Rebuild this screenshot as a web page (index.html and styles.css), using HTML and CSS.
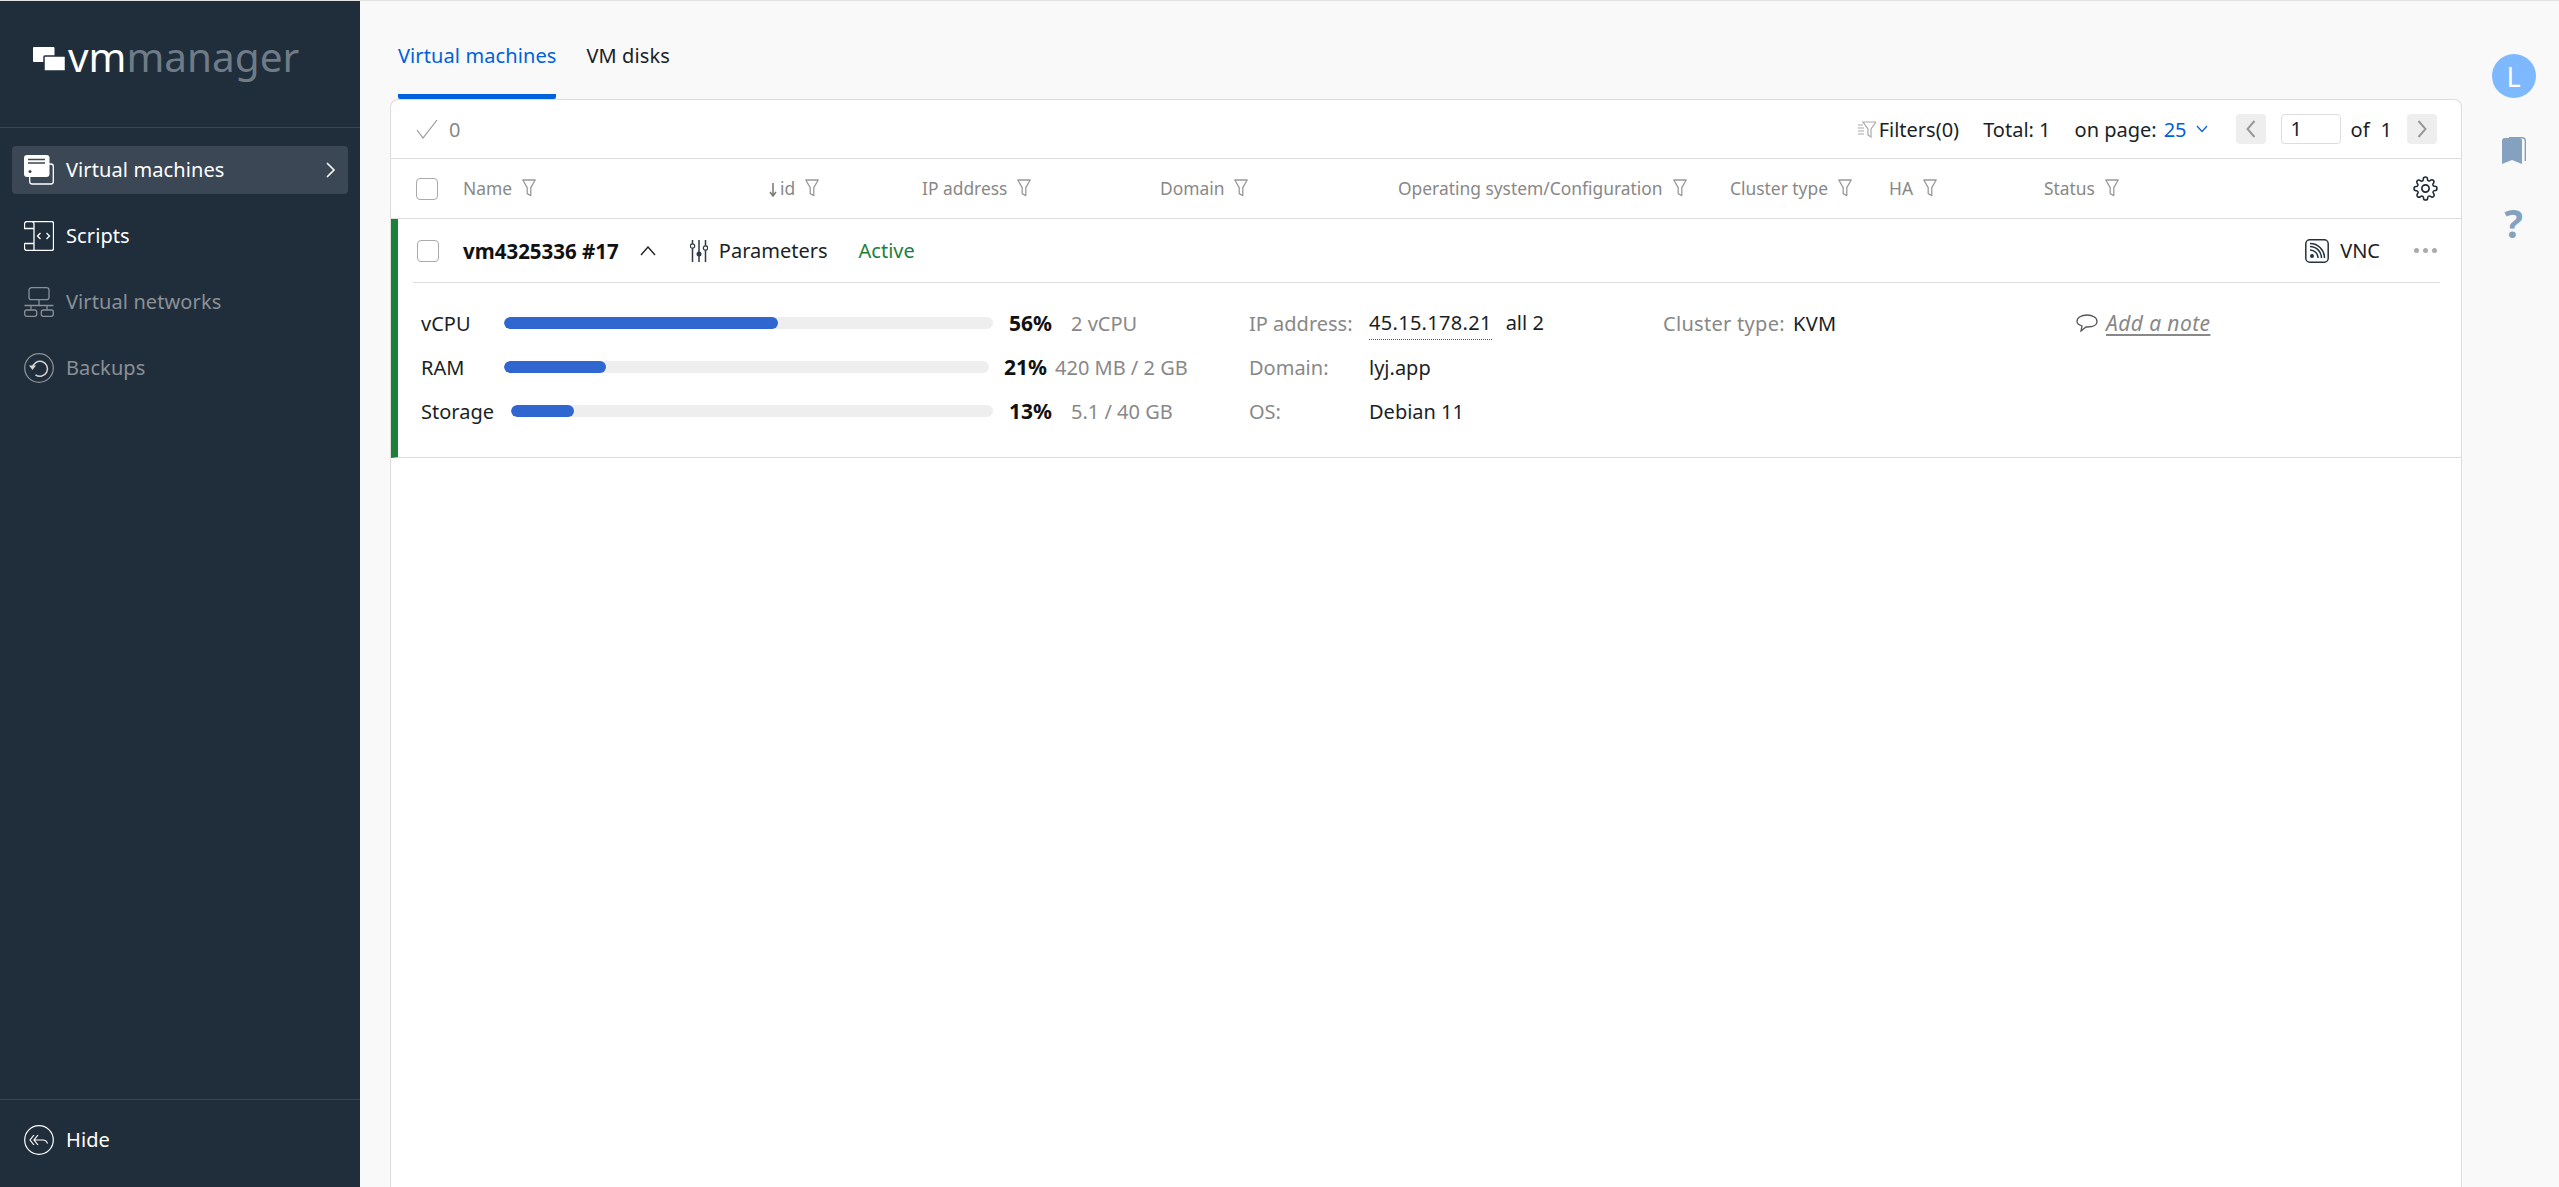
FILE: index.html
```html
<!DOCTYPE html>
<html lang="en">
<head>
<meta charset="utf-8">
<title>VMmanager</title>
<link rel="stylesheet" href="styles.css">
</head>
<body>
<svg class="defs" width="0" height="0" aria-hidden="true">
  <symbol id="funnel" viewBox="0 0 14 18"><path d="M.8 1h12.400L8.800 8.600v8L5.200 14.600V8.600z" fill="none" stroke="currentColor" stroke-width="1.300" stroke-linejoin="round"/></symbol>
</svg>
<div class="app">
  <aside class="sidebar">
    <div class="logo">
      <svg class="logo-mark" viewBox="0 0 33 24"><rect x="0" y="0" width="21.500" height="15" rx="1" fill="#fff"/><rect x="11" y="9" width="21.500" height="15" rx="1" fill="#fff" stroke="#202e3c" stroke-width="1.500"/></svg>
      <span class="logo-text"><span class="logo-vm">vm</span>manager</span>
    </div>
    <nav class="nav">
      <a class="nav-item nav-item--active">
        <svg class="nav-icon" viewBox="0 0 30 30"><rect x="5.700" y="9" width="23.600" height="20" rx="2.500" fill="none" stroke="currentColor" stroke-width="1.300"/><rect x="0" y="0" width="25.500" height="22" rx="3" fill="currentColor"/><path d="M4 4.500h17M4 8h17" stroke="#3b4754" stroke-width="1.400"/><circle cx="6" cy="16.500" r="1.500" fill="#3b4754"/></svg>
        <span class="nav-label">Virtual machines</span>
        <svg class="nav-chevron" viewBox="0 0 10 16"><path d="M1.500 1l7 7-7 7" fill="none" stroke="currentColor" stroke-width="1.600"/></svg>
      </a>
      <a class="nav-item">
        <svg class="nav-icon" viewBox="0 0 30 30"><path d="M10 7V3a2.500 2.500 0 0 0-2.500-2.500H3A2.500 2.500 0 0 0 .5 3v4.500H10M3 .5h24.500a2 2 0 0 1 2 2v25a2 2 0 0 1-2 2H3A2.500 2.500 0 0 1 .5 27v-2a2.500 2.500 0 0 1 .5-2.500h9M10 7v22.500" fill="none" stroke="currentColor" stroke-width="1.300"/><path d="M16.500 12l-3 3 3 3M22.500 12l3 3-3 3" fill="none" stroke="currentColor" stroke-width="1.300"/></svg>
        <span class="nav-label">Scripts</span>
      </a>
      <a class="nav-item nav-item--muted">
        <svg class="nav-icon" viewBox="0 0 30 30"><rect x="5" y=".7" width="20" height="12" rx="2.500" fill="none" stroke="currentColor" stroke-width="1.300"/><path d="M15 12.700v5.500M.5 18.500h29M7 18.500v4M23 18.500v4" fill="none" stroke="currentColor" stroke-width="1.300"/><rect x=".7" y="23" width="12" height="6.300" rx="2" fill="none" stroke="currentColor" stroke-width="1.300"/><rect x="17.300" y="23" width="12" height="6.300" rx="2" fill="none" stroke="currentColor" stroke-width="1.300"/></svg>
        <span class="nav-label">Virtual networks</span>
      </a>
      <a class="nav-item nav-item--muted">
        <svg class="nav-icon" viewBox="0 0 30 30"><circle cx="15" cy="15" r="14.300" fill="none" stroke="currentColor" stroke-width="1.300"/><path d="M8.500 15a7.500 7.500 0 1 1 3 6.800" fill="none" stroke="#d5d5d5" stroke-width="1.500"/><path d="M5 12.500h7l-3.500 4.500z" fill="#d5d5d5"/></svg>
        <span class="nav-label">Backups</span>
      </a>
    </nav>
    <div class="side-foot">
      <a class="nav-item">
        <svg class="nav-icon" viewBox="0 0 30 30"><circle cx="15" cy="15" r="14.300" fill="none" stroke="currentColor" stroke-width="1.200"/><path d="M10 10l-4 5 4 5M14 10l-4 5 4 5M10.500 15h8a5 5 0 0 1 5 3.500" fill="none" stroke="currentColor" stroke-width="1.200"/></svg>
        <span class="nav-label">Hide</span>
      </a>
    </div>
  </aside>

  <main class="main">
    <div class="tabs">
      <a class="tab tab--active">Virtual machines</a>
      <a class="tab">VM disks</a>
    </div>
    <section class="card">
      <div class="toolbar">
        <div class="selected">
          <svg class="check-icon" viewBox="0 0 22 20"><path d="M1 11l6 8L21 1" fill="none" stroke="#999" stroke-width="1.200"/></svg>
          <span>0</span>
        </div>
        <div class="tools">
          <span class="filters">
            <svg class="filters-icon" viewBox="0 0 18 18"><path d="M0 5h5M0 8h6M0 11h6M0 14h6" stroke="#aaa" stroke-width="1.200"/><path d="M5 2h13l-5 7v8l-3-2V9z" fill="none" stroke="#aaa" stroke-width="1.200"/></svg>
            Filters(0)
          </span>
          <span class="total">Total: 1</span>
          <span class="per-page">on page: <span class="link">25</span>
            <svg class="down" viewBox="0 0 12 8"><path d="M1 1l5 5.500L11 1" fill="none" stroke="#0061dd" stroke-width="1.200"/></svg>
          </span>
          <span class="pager">
            <button class="page-btn"><svg viewBox="0 0 10 18"><path d="M8.500 1l-7 8 7 8" fill="none" stroke="#999" stroke-width="2"/></svg></button>
            <input class="page-input" value="1" aria-label="page">
            <span class="page-of">of</span>
            <span class="page-count">1</span>
            <button class="page-btn"><svg viewBox="0 0 10 18"><path d="M1.500 1l7 8-7 8" fill="none" stroke="#999" stroke-width="2"/></svg></button>
          </span>
        </div>
      </div>

      <div class="thead">
        <span class="checkbox checkbox--head"></span>
        <div class="columns">
          <span class="th">Name<svg class="funnel"><use href="#funnel"/></svg></span>
          <span class="th"><span class="id-label"><svg class="sort" viewBox="0 0 8 14"><path d="M4 0v12M1 9l3 4 3-4" fill="none" stroke="#777" stroke-width="1.500"/></svg>id</span><svg class="funnel"><use href="#funnel"/></svg></span>
          <span class="th">IP address<svg class="funnel"><use href="#funnel"/></svg></span>
          <span class="th">Domain<svg class="funnel"><use href="#funnel"/></svg></span>
          <span class="th">Operating system/Configuration<svg class="funnel"><use href="#funnel"/></svg></span>
          <span class="th">Cluster type<svg class="funnel"><use href="#funnel"/></svg></span>
          <span class="th">HA<svg class="funnel"><use href="#funnel"/></svg></span>
          <span class="th">Status<svg class="funnel"><use href="#funnel"/></svg></span>
        </div>
        <svg class="gear" viewBox="0 0 24 24"><path d="M12 15.500a3.500 3.500 0 1 0 0-7 3.500 3.500 0 0 0 0 7z" fill="none" stroke="#1f2a36" stroke-width="1.600"/><path d="M19.400 15a1.650 1.650 0 0 0 .33 1.820l.06.06a2 2 0 1 1-2.830 2.830l-.06-.06a1.650 1.650 0 0 0-2.800 1.170V21a2 2 0 1 1-4 0v-.09a1.650 1.650 0 0 0-2.800-1.170l-.06.06a2 2 0 1 1-2.830-2.830l.06-.06a1.650 1.650 0 0 0-1.170-2.800H3a2 2 0 1 1 0-4h.09a1.650 1.650 0 0 0 1.170-2.800l-.06-.06a2 2 0 1 1 2.830-2.830l.06.06a1.650 1.650 0 0 0 2.800-1.170V3a2 2 0 1 1 4 0v.09a1.650 1.650 0 0 0 2.800 1.170l.06-.06a2 2 0 1 1 2.830 2.830l-.06.06a1.650 1.650 0 0 0 1.170 2.800H21a2 2 0 1 1 0 4h-.09a1.650 1.650 0 0 0-1.510 1z" fill="none" stroke="#1f2a36" stroke-width="1.500"/></svg>
      </div>

      <article class="vm">
        <header class="vm-head">
          <span class="checkbox"></span>
          <strong class="vm-name">vm4325336 #17</strong>
          <svg class="vm-up" viewBox="0 0 16 10"><path d="M1 9l7-8 7 8" fill="none" stroke="#222" stroke-width="1.400"/></svg>
          <span class="params">
            <svg class="params-icon" viewBox="0 0 18 22"><path d="M2.500 0v22M9 0v22M15.500 0v22" stroke="#2f3a46" stroke-width="1.500"/><circle cx="2.500" cy="6" r="2.200" fill="#fff" stroke="#2f3a46" stroke-width="1.200"/><circle cx="9" cy="14" r="2.500" fill="#2f3a46"/><circle cx="15.500" cy="8" r="2.200" fill="#fff" stroke="#2f3a46" stroke-width="1.200"/></svg>
            Parameters
          </span>
          <span class="status">Active</span>
          <span class="vnc">
            <svg class="vnc-icon" viewBox="0 0 24 24"><rect x=".8" y=".8" width="22.400" height="22.400" rx="4" fill="none" stroke="#26323e" stroke-width="1.500"/><circle cx="7" cy="17" r="2" fill="#26323e"/><path d="M5 11a8 8 0 0 1 8 8M5 7.500a11.500 11.500 0 0 1 11.500 11.500M5 4.500a14.500 14.500 0 0 1 14.500 14.500" fill="none" stroke="#26323e" stroke-width="1.500"/></svg>
            VNC
          </span>
          <span class="dots"><i></i><i></i><i></i></span>
        </header>
        <div class="vm-body">
          <div class="resources">
            <div class="res">
              <span class="res-label">vCPU</span>
              <span class="track"><span class="fill" style="width:56%"></span></span>
              <b class="pct">56%</b>
              <span class="res-val">2 vCPU</span>
            </div>
            <div class="res res--ram">
              <span class="res-label">RAM</span>
              <span class="track"><span class="fill" style="width:21%"></span></span>
              <b class="pct">21%</b>
              <span class="res-val">420 MB / 2 GB</span>
            </div>
            <div class="res res--storage">
              <span class="res-label">Storage</span>
              <span class="track"><span class="fill" style="width:13%"></span></span>
              <b class="pct">13%</b>
              <span class="res-val">5.1 / 40 GB</span>
            </div>
          </div>
          <dl class="info">
            <div class="info-row"><dt>IP address:</dt><dd><span class="ip">45.15.178.21</span><span class="ip-all">all 2</span></dd></div>
            <div class="info-row"><dt>Domain:</dt><dd>lyj.app</dd></div>
            <div class="info-row"><dt>OS:</dt><dd>Debian 11</dd></div>
          </dl>
          <div class="cluster"><span class="cluster-label">Cluster type:</span> KVM</div>
          <div class="note">
            <svg class="note-icon" viewBox="0 0 22 18"><path d="M11 1c5.500 0 10 2.500 10 6.500S16.500 13 11 13h-1l-5 4 1-5C3 11 1 9.500 1 7.500 1 3.500 5.500 1 11 1z" fill="none" stroke="#555" stroke-width="1.300"/></svg>
            <a class="note-link">Add a note</a>
          </div>
        </div>
      </article>
    </section>
  </main>

  <aside class="rail">
    <span class="avatar">L</span>
    <svg class="rail-book" viewBox="0 0 24 27"><path d="M0 4a3 3 0 0 1 3-3h14a3 3 0 0 1 3 3v23l-10-4-10 4z" fill="#84a2c0"/><path d="M7 .7h13a3.300 3.300 0 0 1 3.300 3.300v20" fill="none" stroke="#84a2c0" stroke-width="1.400"/></svg>
    <span class="rail-help">?</span>
  </aside>
</div>
</body>
</html>
```

FILE: styles.css
```css
* { box-sizing: border-box; }
html, body { height: 100%; }
body {
  margin: 0;
  background: #f9f9f9;
  color: #1a1f26;
  font-family: "Noto Sans", "Open Sans", sans-serif;
  font-size: 20px;
  overflow: hidden;
}
.defs { position: absolute; }
.app {
  display: flex;
  height: 100vh;
  border-top: 1px solid #e2e2e2;
}

/* sidebar */
.sidebar {
  width: 360px;
  flex: none;
  background: #202e3c;
  color: #fff;
  display: flex;
  flex-direction: column;
}
.logo {
  height: 127px;
  padding: 46px 0 0 33px;
  display: flex;
  align-items: flex-start;
  gap: 2px;
  border-bottom: 1px solid #3a4754;
}
.logo-mark { width: 33px; height: 24px; flex: none; }
.logo-text {
  font-size: 40.500px;
  line-height: 20px;
  color: #6f7b86;
}
.logo-vm { color: #fff; }
.nav { padding: 18px 12px 0; flex: 1; }
.nav-item {
  height: 48px;
  margin-bottom: 18px;
  padding: 0 12px;
  display: flex;
  align-items: center;
  gap: 12px;
  border-radius: 4px;
  font-size: 20px;
  letter-spacing: .1px;
}
.nav-label { padding-bottom: 2px; }
.nav-item--active { background: #3b4754; }
.nav-item--muted { color: #8b9096; }
.nav-icon { width: 30px; height: 30px; flex: none; }
.nav-chevron { width: 11px; height: 16px; margin-left: auto; }
.side-foot {
  height: 88px;
  padding: 16px 12px 0;
  border-top: 1px solid #3a4754;
}
.side-foot .nav-item { margin: 0; }

/* main */
.main { flex: 1; min-width: 0; padding: 0 0 0 30px; display: flex; flex-direction: column; }
.tabs { height: 98px; display: flex; gap: 30px; padding-left: 8px; }
.tab {
  height: 98px;
  padding-top: 39px;
  line-height: 32px;
  letter-spacing: .1px;
  border-bottom: 5px solid transparent;
}
.tab--active { color: #0061dd; border-bottom-color: #0061dd; border-radius: 0 0 2px 2px; }
.card {
  flex: 1;
  background: #fff;
  border: 1px solid #dddddd;
  border-bottom: 0;
  border-radius: 8px 8px 0 0;
}
.toolbar {
  height: 59px;
  padding: 0 24px 0 25px;
  display: flex;
  align-items: center;
  justify-content: space-between;
  border-bottom: 1px solid #dddddd;
}
.selected { display: flex; align-items: center; gap: 11px; color: #888; }
.check-icon { width: 22px; height: 20px; }
.tools { display: flex; align-items: center; }
.filters { display: flex; align-items: center; gap: 3px; margin-right: 24px; }
.filters-icon { width: 18px; height: 18px; }
.total { margin-right: 24px; }
.per-page { display: flex; align-items: center; gap: 7px; margin-right: 28px; }
.link { color: #0061dd; }
.down { width: 12px; height: 8px; margin-left: 2px; }
.pager { display: flex; align-items: center; }
.page-btn {
  width: 30px;
  height: 30px;
  padding: 0;
  border: 0;
  border-radius: 4px;
  background: #eeeeee;
  display: flex;
  align-items: center;
  justify-content: center;
}
.page-btn svg { width: 10px; height: 18px; }
.page-input {
  width: 60px;
  height: 30px;
  margin-left: 15px;
  padding: 0 0 2px 9px;
  border: 1px solid #dddddd;
  border-radius: 4px;
  font: inherit;
  color: inherit;
  background: #fff;
}
.page-of { margin-left: 10px; }
.page-count { margin-left: 11px; margin-right: 15px; }

.thead {
  height: 60px;
  padding: 0 23px 0 25px;
  display: flex;
  align-items: center;
  border-bottom: 1px solid #dddddd;
}
.checkbox {
  width: 22px;
  height: 22px;
  flex: none;
  background: #fff;
  border: 1px solid #aaaaaa;
  border-radius: 4px;
}
.columns {
  flex: 1;
  margin-left: 25px;
  margin-top: -2px;
  display: grid;
  grid-template-columns: 306px 153px 238px 238px 332px 159px 155px 1fr;
}
.th { display: flex; align-items: center; gap: 10px; color: #888; font-size: 17.400px; }
.id-label { display: flex; align-items: center; gap: 3px; }
.sort { width: 8px; height: 14px; margin-top: 4px; }
.funnel { width: 14px; height: 18px; color: #999; }
.gear { width: 25px; height: 25px; flex: none; }

/* vm row */
.vm {
  border-left: 7px solid #1b8139;
  border-bottom: 1px solid #dddddd;
}
.vm-head {
  height: 64px;
  margin: 0 21px 0 15px;
  padding: 0 0 0 4px;
  display: flex;
  align-items: center;
  border-bottom: 1px solid #dddddd;
}
.vm-name { margin-left: 24px; font-size: 20.500px; color: #111; }
.vm-up { width: 16px; height: 10px; margin-left: 21px; }
.params { display: flex; align-items: center; gap: 11px; margin-left: 34px; }
.params-icon { width: 18px; height: 22px; }
.status { margin-left: 31px; color: #1b8139; }
.vnc { display: flex; align-items: center; gap: 11px; margin-left: auto; }
.vnc-icon { width: 24px; height: 24px; }
.dots { display: flex; gap: 4px; margin-left: 34px; margin-right: 3px; }
.dots i { width: 5px; height: 5px; border-radius: 50%; background: #aaa; }
.vm-body {
  padding: 18px 0 24px 23px;
  display: grid;
  grid-template-columns: 828px 414px 413px 1fr;
}
.res, .info-row, .cluster, .note { height: 44px; display: flex; align-items: center; }
.res-label { width: 83px; flex: none; }
.track {
  width: 489px;
  height: 12px;
  border-radius: 6px;
  background: #eeeeee;
  overflow: hidden;
}
.fill { display: block; height: 100%; border-radius: 6px; background: #3066cf; }
.pct { margin-left: 16px; width: 62px; flex: none; font-size: 21px; color: #111; }
.res-val { color: #888; white-space: nowrap; }
.res--ram .track { width: 485px; }
.res--ram .pct { margin-left: 15px; width: 51px; }
.res--storage .res-label { width: 90px; }
.res--storage .track { width: 482px; }
.info { margin: 0; }
.info-row dt { width: 120px; color: #888; }
.info-row dd { margin: 0; display: flex; }
.ip { border-bottom: 1px dotted #555; padding-bottom: 3px; margin-bottom: -3px; letter-spacing: .3px; }
.ip-all { margin-left: 14px; }
.cluster { letter-spacing: .3px; }
.cluster-label { color: #888; margin-right: 8px; }
.note-icon { width: 22px; height: 18px; margin-right: 8px; }
.note-link {
  color: #888;
  font-size: 21px;
  font-style: italic;
  letter-spacing: .4px;
  text-decoration: underline;
  text-decoration-thickness: 2px;
  text-underline-offset: 3px;
}

/* right rail */
.rail {
  width: 97px;
  flex: none;
  display: flex;
  flex-direction: column;
  align-items: center;
  padding-top: 53px;
  padding-left: 6px;
}
.avatar {
  width: 44px;
  height: 44px;
  border-radius: 50%;
  background: #7eb8ff;
  color: #fff;
  font-size: 27px;
  display: flex;
  align-items: center;
  justify-content: center;
}
.rail-book { width: 24px; height: 27px; margin-top: 39px; }
.rail-help { margin-top: 34px; color: #84a2c0; font-size: 39px; font-weight: 700; line-height: 50px; }
```
